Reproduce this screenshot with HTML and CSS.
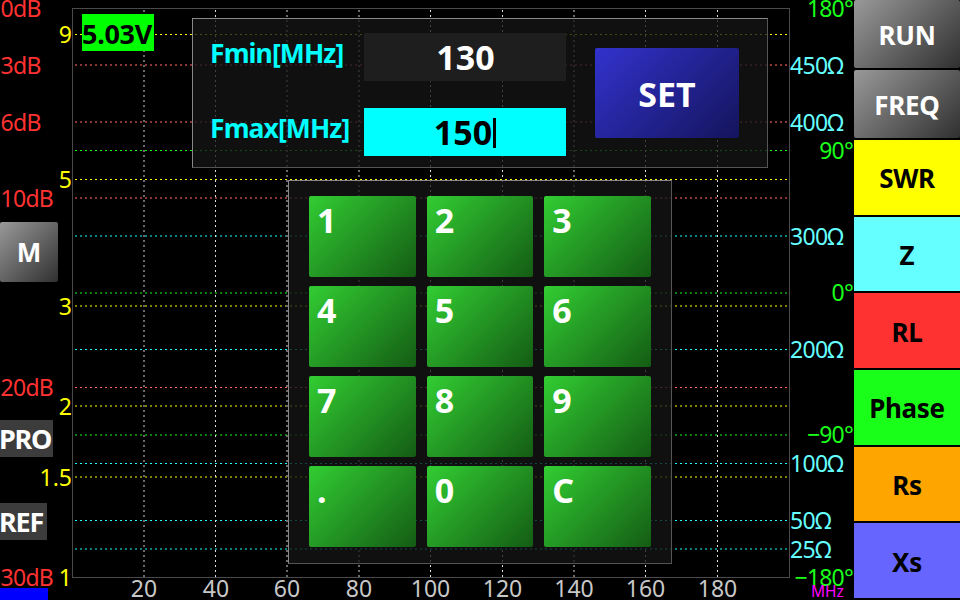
FILE: index.html
```html
<!DOCTYPE html>
<html lang="en">
<head>
    <meta charset="UTF-8">
    <meta name="viewport" content="width=device-width, initial-scale=1.0">
    <title>Antenna Analyzer</title>
    <link rel="stylesheet" href="styles.css">
</head>
<body>
    <div class="screen">
        <!-- chart: frame, grid and axis labels -->
        <svg class="chart" width="960" height="600" viewBox="0 0 960 600">
            <rect class="frame" x="72.5" y="8.5" width="717" height="569"/>
            <g class="grid">
                <path class="yellow" d="M75 34.5H788M75 179.5H788"/>
                <path class="yellow-dim" d="M75 306H788M75 406H788M75 477H788"/>
                <path class="red-dim" d="M75 65H788M75 122H788M75 198H788"/>
                <path class="red" d="M75 387.5H788"/>
                <path class="green" d="M75 150.5H788"/>
                <path class="green-dim" d="M75 293H788M75 435H788"/>
                <path class="cyan" d="M75 349.5H788M75 463.5H788M75 520.5H788"/>
                <path class="cyan-dim" d="M75 236H788M75 549H788"/>
                <path class="gray" d="M144 10V577M287 10V577M359 10V577M574 10V577"/>
                <path class="white" d="M215.5 10V577M430.5 10V577M502.5 10V577M645.5 10V577M717.5 10V577"/>
            </g>
            <g class="labels db">
                <text x="0.5" y="17">0dB</text>
                <text x="0.5" y="73.5">3dB</text>
                <text x="0.5" y="130.5">6dB</text>
                <text x="0.5" y="206.5">10dB</text>
                <text x="0.5" y="396">20dB</text>
                <text x="0.5" y="586">30dB</text>
            </g>
            <g class="labels swr">
                <text x="72" y="43">9</text>
                <text x="72" y="188">5</text>
                <text x="72" y="314.5">3</text>
                <text x="72" y="414.5">2</text>
                <text x="72" y="485.5">1.5</text>
                <text x="72" y="586">1</text>
            </g>
            <g class="labels ohm">
                <text x="790" y="74">450Ω</text>
                <text x="790" y="130.5">400Ω</text>
                <text x="790" y="244.5">300Ω</text>
                <text x="790" y="358">200Ω</text>
                <text x="790" y="472">100Ω</text>
                <text x="790" y="529">50Ω</text>
                <text x="790" y="557.5">25Ω</text>
            </g>
            <g class="labels deg">
                <text x="853" y="17">180°</text>
                <text x="853" y="159">90°</text>
                <text x="853" y="301">0°</text>
                <text x="853" y="443">−90°</text>
                <text x="853" y="586">−180°</text>
            </g>
            <g class="labels freq">
                <text x="144" y="596.5">20</text>
                <text x="216" y="596.5">40</text>
                <text x="287" y="596.5">60</text>
                <text x="359" y="596.5">80</text>
                <text x="430.5" y="596.5">100</text>
                <text x="502.5" y="596.5">120</text>
                <text x="574" y="596.5">140</text>
                <text x="645.5" y="596.5">160</text>
                <text x="717.5" y="596.5">180</text>
            </g>
            <text class="unit" x="811" y="596.5">MHz</text>
        </svg>

        <!-- left side -->
        <div class="voltage">5.03V</div>
        <button class="btn-m">M</button>
        <div class="tag tag-pro">PRO</div>
        <div class="tag tag-ref">REF</div>
        <div class="progress"></div>

        <!-- frequency range dialog -->
        <div class="panel range">
            <div class="fields">
                <div class="field">
                    <span class="name">Fmin[MHz]</span>
                    <div class="value">130</div>
                </div>
                <div class="field">
                    <span class="name">Fmax[MHz]</span>
                    <div class="value active">150<i class="caret"></i></div>
                </div>
            </div>
            <button class="btn-set">SET</button>
        </div>

        <div class="panel keypad">
            <button>1</button>
            <button>2</button>
            <button>3</button>
            <button>4</button>
            <button>5</button>
            <button>6</button>
            <button>7</button>
            <button>8</button>
            <button>9</button>
            <button>.</button>
            <button>0</button>
            <button>C</button>
        </div>

        <!-- menu -->
        <div class="menu">
            <button class="action">RUN</button>
            <button class="action">FREQ</button>
            <button class="m-swr">SWR</button>
            <button class="m-z">Z</button>
            <button class="m-rl">RL</button>
            <button class="m-phase">Phase</button>
            <button class="m-rs">Rs</button>
            <button class="m-xs">Xs</button>
        </div>
    </div>
</body>
</html>
```
FILE: styles.css
```css
* {
    margin: 0;
    padding: 0;
    box-sizing: border-box;
}

body {
    background: #000;
    font-family: "Noto Sans", sans-serif;
    overflow: hidden;
}

button {
    border: none;
    font-family: inherit;
    font-weight: bold;
    color: #fff;
}

.screen {
    position: relative;
    width: 960px;
    height: 600px;
    overflow: hidden;
    display: flex;
    justify-content: flex-end;
}

/* chart */
.chart {
    position: absolute;
    left: 0;
    top: 0;
}

.frame {
    fill: none;
    stroke: #4a4a4a;
}

.grid path {
    fill: none;
    stroke-width: 1;
    stroke-dasharray: 2 3;
}

.grid .yellow { stroke: #ffff00; }
.grid .red { stroke: #ff6060; }
.grid .green { stroke: #1aff1a; }
.grid .cyan { stroke: #20ffff; }
.grid .white { stroke: #dddddd; }
.grid .yellow-dim { stroke: #808000; stroke-width: 2; }
.grid .red-dim { stroke: #8a3636; stroke-width: 2; }
.grid .green-dim { stroke: #0d800d; stroke-width: 2; }
.grid .cyan-dim { stroke: #0a8080; stroke-width: 2; }
.grid .gray { stroke: #6a6a6a; stroke-width: 2; }

.labels {
    font-size: 23px;
}

.db { fill: #ff3232; letter-spacing: -0.7px; }
.swr { fill: #ffff00; text-anchor: end; }
.ohm { fill: #66ffff; letter-spacing: -0.7px; }
.deg { fill: #1aff1a; text-anchor: end; letter-spacing: -0.8px; }
.freq { fill: #c8c8c8; text-anchor: middle; }

.unit {
    fill: #ff00ff;
    font-size: 15.5px;
}

/* left side */
.voltage {
    position: absolute;
    left: 82px;
    top: 14px;
    width: 72px;
    height: 37px;
    background: #00ff00;
    color: #000;
    font-size: 27px;
    font-weight: bold;
    line-height: 39px;
    letter-spacing: -0.3px;
    white-space: nowrap;
}

.btn-m {
    position: absolute;
    left: 0;
    top: 222px;
    width: 58px;
    height: 60px;
    border-radius: 2px;
    background: linear-gradient(135deg, #999, #303030);
    font-size: 26px;
}

.tag {
    position: absolute;
    left: 0;
    height: 37px;
    background: #3c3c3c;
    color: #fff;
    font-size: 27px;
    font-weight: bold;
    line-height: 38px;
    letter-spacing: -1.2px;
    text-indent: -1px;
}

.tag-pro {
    top: 420px;
    width: 53px;
}

.tag-ref {
    top: 503px;
    width: 47px;
}

.progress {
    position: absolute;
    left: 0;
    bottom: 0;
    width: 48px;
    height: 12px;
    background: #0000ff;
}

/* dialog */
.panel {
    position: absolute;
    background: rgba(20, 20, 20, 0.78);
    border: 1px solid;
    border-color: #888 #555 #555 #888;
}

.range {
    left: 192px;
    top: 18px;
    width: 576px;
    height: 150px;
    display: flex;
    align-items: center;
    gap: 29px;
    padding-left: 17px;
}

.fields {
    display: flex;
    flex-direction: column;
    gap: 27px;
    width: 356px;
    padding-top: 2px;
}

.field {
    display: flex;
    justify-content: space-between;
}

.name {
    color: #00ffff;
    font-size: 26.5px;
    font-weight: bold;
    line-height: 41px;
    letter-spacing: -0.9px;
}

.value {
    display: flex;
    align-items: center;
    justify-content: center;
    width: 202px;
    height: 48px;
    padding-left: 1px;
    background: #1e1e1e;
    color: #fff;
    font-size: 34px;
    font-weight: bold;
}

.value.active {
    padding-left: 0;
    background: #00ffff;
    color: #000;
}

.caret {
    width: 3px;
    height: 30px;
    margin: 2px 0 0 1px;
    background: #000;
}

.btn-set {
    width: 144px;
    height: 90px;
    padding-top: 2px;
    border-radius: 2px;
    background: linear-gradient(135deg, #3232cd, #14145c);
    font-size: 34px;
}

.keypad {
    left: 288px;
    top: 180px;
    width: 384px;
    height: 384px;
    display: grid;
    grid-template-columns: repeat(3, 1fr);
    grid-template-rows: repeat(4, 1fr);
    gap: 8.4px 11px;
    padding: 15px 20px 16px;
}

.keypad button {
    display: flex;
    align-items: flex-start;
    padding-left: 8px;
    border-radius: 2px;
    background: linear-gradient(135deg, #32cd32, #145c14);
    font-size: 34px;
    line-height: 48px;
}

/* menu */
.menu {
    position: relative;
    display: flex;
    flex-direction: column;
    gap: 2px;
    width: 106px;
    height: 598px;
}

.menu button {
    flex: 1;
    width: 106px;
    padding-top: 2px;
    color: #000;
    font-size: 26px;
    letter-spacing: -0.3px;
}

.menu .action {
    flex: none;
    height: 68px;
    border-radius: 2px;
    background: linear-gradient(135deg, #999, #303030);
    color: #fff;
}

.menu .m-swr { background: #ffff00; }
.menu .m-z { background: #66ffff; }
.menu .m-rl { background: #ff3232; }
.menu .m-phase { background: #1aff1a; }
.menu .m-rs { background: #ffa500; }
.menu .m-xs { background: #6666ff; }
```
